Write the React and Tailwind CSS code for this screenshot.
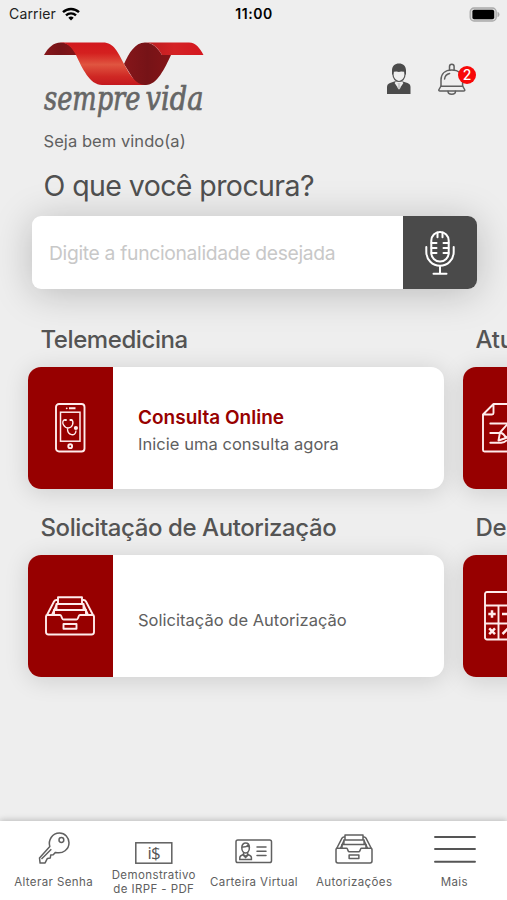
function WifiIcon() {
  return (
    <svg className="h-[14px] w-[18px]" viewBox="0 0 18 14" fill="none" stroke="#000" strokeWidth="2.4">
      <path d="M1 5.2a11.6 11.6 0 0 1 16 0" />
      <path d="M4 8.4a7.3 7.3 0 0 1 10 0" />
      <path d="M9 13.4 6.3 10.7a3.9 3.9 0 0 1 5.4 0Z" fill="#000" stroke="none" />
    </svg>
  );
}

function BatteryIcon() {
  return (
    <svg className="h-[15px] w-[32px]" viewBox="0 0 32 15">
      <rect x="1.200" y="1" width="26" height="13" rx="3.8" fill="#d8d8d8" stroke="#aaa" strokeWidth="1.3" />
      <rect x="3.400" y="2.800" width="21.800" height="9.400" rx="1.800" fill="#000" />
      <path d="M28.500 4.800 C31.200 6 31.200 9 28.500 10.200 Z" fill="#aaa" />
    </svg>
  );
}

function Logo() {
  return (
    <svg className="block h-[82px] w-[164px] overflow-visible" viewBox="0 0 164 82">
      <defs>
        <linearGradient id="band" x1="0" y1="0" x2="0" y2="1">
          <stop offset="0" stopColor="#d2181e" />
          <stop offset=".25" stopColor="#d4201f" />
          <stop offset=".52" stopColor="#e05540" />
          <stop offset=".8" stopColor="#cf2824" />
          <stop offset="1" stopColor="#c4181e" />
        </linearGradient>
        <linearGradient id="tail" x1="0" y1="0" x2="1" y2="0">
          <stop offset="0" stopColor="#b81c1e" />
          <stop offset=".5" stopColor="#d42225" />
          <stop offset="1" stopColor="#d4171f" />
        </linearGradient>
        <linearGradient id="fold" x1="0" y1="0" x2="1" y2="0">
          <stop offset="0" stopColor="#86161a" />
          <stop offset=".5" stopColor="#761317" />
          <stop offset="1" stopColor="#851417" />
        </linearGradient>
      </defs>
      <path d="M1 15C5 8 10 2.500 18 2.500c8 0 12 6 16 12.500Z" fill="url(#fold)" />
      <path d="M81 24C86 13 92 2.500 102 2.500c8 0 13 6 17 12.500h9C122 28 114 45 103 45H94Z" fill="url(#fold)" />
      <path d="M16 2.500h44c11 0 15 10 21 21.500 6 11 12 21 21 21H59C47 45 39 28 33 15 29 7 24 2.500 16 2.500Z" fill="url(#band)" />
      <path d="M102 2.500h44c7 0 11 6 14.500 12.500h-41.500C115 8 110 2.500 102 2.500Z" fill="url(#tail)" />
      <text x="1" y="70" fontFamily="'DejaVu Serif Condensed','DejaVu Serif',serif" fontStyle="italic" fontSize="33" fill="#666" stroke="#666" strokeWidth=".7" textLength="96.500" lengthAdjust="spacingAndGlyphs">sempre</text>
      <text x="102.500" y="70" fontFamily="'DejaVu Serif Condensed','DejaVu Serif',serif" fontStyle="italic" fontSize="33" fill="#666" stroke="#666" strokeWidth=".7" textLength="58" lengthAdjust="spacingAndGlyphs">vida</text>
    </svg>
  );
}

function UserIcon() {
  return (
    <svg className="h-[32px] w-[26px]" viewBox="0 0 26 32">
      <path d="M1 31v-7q0-3 3-4l5-1.800h7L21.500 20q3 1 3 4v7Z" fill="#4b4b4b" />
      <path d="M9.800 16.500h6.400v2.300l1.200 1.200L13 26.500 8.600 20l1.200-1.200Z" fill="#eee" />
      <path d="m11.500 20h3l-.5 2 .5 3-1.500 1.500L11.500 25l.5-3Z" fill="#ccc" />
      <path d="M7 7.500h12v4c0 4-3 7-6 7s-6-3-6-7Z" fill="#eee" stroke="#555" strokeWidth="1.200" />
      <path d="M6 11.500V7.500C6 3 9 .5 13 .5s7 2.500 7 7v4h-1L18.200 8.800q-4-.8-5.200.2-2-.9-5.200-.2L7 11.500Z" fill="#4b4b4b" />
    </svg>
  );
}

function BellIcon() {
  return (
    <svg className="h-[33px] w-[28px]" viewBox="0 0 28 33" fill="none" stroke="#5f5f5f" strokeWidth="1.500" strokeLinejoin="round" strokeLinecap="round">
      <path d="M11.500 7V3.500a2.300 2.300 0 0 1 4.600 0V7" />
      <path d="M3 23V17C3 11 7 7 13.800 7s10.800 4 10.800 10v6l2 3.500q.6 1.500-1 1.500H2q-1.600 0-1-1.500Z" />
      <path d="M2.800 23.300h22M10 28.200c0 4 7.500 4 7.500 0M6.600 16q.4-4.500 5-5.500" />
    </svg>
  );
}

function MicIcon() {
  return (
    <svg className="h-[46px] w-[30px]" viewBox="0 0 30 46" fill="none" stroke="#fff" strokeWidth="2" strokeLinecap="round">
      <rect x="6.300" y="2" width="17.400" height="29.500" rx="8.600" />
      <path d="M1.300 17v5a13.700 13.700 0 0 0 27.400 0v-5M15 36v7.500M8.500 43.800h13" />
      <path d="M12.500 2.500v4.700M17.500 2.500v4.700M6.500 13h5M6.500 18h5M6.500 23h5M23.500 13h-5M23.500 18h-5M23.500 23h-5" />
    </svg>
  );
}

function PhoneIcon() {
  return (
    <svg className="h-[50px] w-[31px]" viewBox="0 0 31 50" fill="none" stroke="#ffecec" strokeWidth="1.900">
      <rect x="1" y="1" width="28.500" height="47.500" rx="3" />
      <rect x="5.500" y="9.200" width="19.500" height="29" strokeWidth="1.500" />
      <path d="M14 5.300h6.500" strokeWidth="2" />
      <circle cx="11.700" cy="5.300" r=".9" fill="#ffecec" stroke="none" />
      <circle cx="15.200" cy="43.200" r="1.900" />
      <path d="M9.500 16.500c-4 3 0 8.500 3.700 8.500s6.500-5 3.500-8.500M12.500 25c-.5 8 8.500 9 8.500 2.500" strokeWidth="1.300" />
      <path d="M9.200 16.900h2.500M14.600 16.900H17" strokeWidth="2" />
      <circle cx="20.900" cy="25" r="2.100" fill="#ffecec" stroke="none" />
    </svg>
  );
}

function TrayIcon({ className, strokeWidth }) {
  return (
    <svg className={className} viewBox="0 0 50 40" fill="none" stroke="currentColor" strokeWidth={strokeWidth} strokeLinejoin="round">
      <path d="M1 20.500q0-1.500 1.500-1.500H15q.8 0 1.200 1l1 2.500q.4 1 1.500 1h12.600q1.100 0 1.500-1l1-2.500q.4-1 1.200-1h12.500q1.500 0 1.500 1.500V36q0 2.500-2.500 2.500h-43Q1 38.500 1 36Z" />
      <path d="M2 19 9 5.500q.8-1.500 2.500-1.500H13M48 19 41 5.500Q40.200 4 38.500 4H37M7 19l4.500-10M43 19 38.500 9" />
      <path d="M13 8V1.200h24V8M11.500 14V8h27v6M9 19v-5h32v5" />
      <rect x="18.500" y="28" width="13" height="4.800" />
    </svg>
  );
}

function DocumentIcon() {
  return (
    <svg className="h-[50px] w-[46px] shrink-0" viewBox="0 0 46 50" fill="none" stroke="#ffecec" strokeWidth="1.900" strokeLinejoin="round">
      <path d="M40 17V3q0-2-2-2H11.500L1 11.500V47q0 1.500 1.500 1.500H38q2 0 2-2V34M1 11.500h9q1.500 0 1.500-1.500V1" />
      <path d="M8.300 20.500H34M8.300 30h10M8.300 39.700h11q3 0 5-2" strokeLinecap="round" />
      <path d="m16.500 37.500 1.500-8L31 15l6 5.500L24 35Zm1.500-8q4 1 6 5.500" />
    </svg>
  );
}

function CalculatorIcon() {
  return (
    <svg className="h-[50px] w-[42px] shrink-0" viewBox="0 0 42 50" fill="none" stroke="#ffecec" strokeWidth="1.900">
      <rect x="1" y="1" width="40" height="47.500" rx="2" />
      <path d="M1 14.500h40M1 32.500h40M14.500 14.500v34M28 14.500v34" />
      <path d="M4.300 23h7.400M8 19.300v7.400M18 23h7M31 23h7M5.200 37.300l5.800 5.800M11 37.300l-5.800 5.800M18.500 43l6-6M31 40h7" strokeWidth="2.500" />
    </svg>
  );
}

function KeyIcon() {
  return (
    <svg className="h-[32px] w-[32px]" viewBox="0 0 32 32" fill="none" stroke="#606060" strokeWidth="1.500" strokeLinejoin="round">
      <path d="M11.800 14.500C10 8.500 14 1 21.500 1 27 1 31 5.500 31 10.800c0 6.500-6 11.500-13.500 9.600l-2.300 2.300-2.500.4-.4 2.900-2.900.4-2.300 4.500-5 .2-.6-5.100Z" />
      <circle cx="23.400" cy="8" r="2.400" />
      <path d="m3.500 27 9.800-9.800" />
    </svg>
  );
}

function MoneyIcon() {
  return (
    <svg className="h-[22px] w-[38px]" viewBox="0 0 38 22">
      <rect x=".8" y=".8" width="36" height="20.400" fill="none" stroke="#606060" strokeWidth="1.500" />
      <text x="12.500" y="16.500" fontFamily="Open Sans" fontSize="17" fill="#555" textLength="13.500">i$</text>
    </svg>
  );
}

function CardIcon() {
  return (
    <svg className="h-[25px] w-[38px]" viewBox="0 0 38 25" fill="none" stroke="#606060" strokeWidth="1.500">
      <rect x="1" y="1" width="35.500" height="22.500" rx="1.800" />
      <path d="M4.800 20.500v-2q0-1.800 3-2.800l2.800 2.800 2.800-2.800q3 1 3 2.800v2Z" />
      <path d="M8.600 13v2.700l2 1.800 2-1.800V13" />
      <path d="M6.800 8.500c0 3 1.500 5.500 3.800 5.500s3.800-2.500 3.800-5.500c0-6-7.600-6-7.600 0Zm0-.5h1.500q3.500 0 4.200-1.500Q12.800 8 14.400 8" />
      <path d="M22 8h9M22 12.300h9M22 16.600h9" strokeLinecap="round" />
    </svg>
  );
}

function MenuIcon() {
  return (
    <svg className="h-[30px] w-[43px]" viewBox="0 0 43 30" stroke="#555" strokeWidth="1.900" strokeLinecap="round">
      <path d="M2 3h40M2 15h40M2 27.700h40" />
    </svg>
  );
}

function ServiceCard({ heading, headingClass, icon, children }) {
  return (
    <section className="w-[416px] shrink-0">
      <h2 className={`h-[42px] whitespace-nowrap pl-[13px] text-[24px] font-medium leading-[30px] text-[#545454] ${headingClass}`}>{heading}</h2>
      <div className="flex h-[122px] overflow-hidden rounded-[13px] bg-white shadow-[0_3px_24px_rgba(0,0,0,0.14)]">
        <div className="flex w-[85.500px] shrink-0 items-center justify-center bg-[#970000] text-[#ffecec]">{icon}</div>
        <div className="flex flex-col justify-center whitespace-nowrap pl-[25px]">{children}</div>
      </div>
    </section>
  );
}

function NavItem({ icon, children, iconBox }) {
  return (
    <button className="flex w-[100.2px] shrink-0 flex-col items-center text-[11.5px] leading-[14px] tracking-[0.4px] text-[#606060]">
      <span className={iconBox}>{icon}</span>
      <span className="whitespace-nowrap">{children}</span>
    </button>
  );
}

export default function App() {
  return (
    <div className="flex h-[900px] w-[507px] flex-col overflow-hidden bg-[#eee] font-['Inter','Liberation_Sans',sans-serif]">
      <header className="grid h-[28px] shrink-0 grid-cols-[1fr_60px_1fr] items-center pl-[9px] pr-[6px] text-[14px] leading-[20px]">
        <div className="flex items-center gap-[6px] tracking-[0.15px] text-[#222]"><span>Carrier</span><WifiIcon /></div>
        <div className="pr-[2px] text-center font-semibold tracking-[0.5px] text-black">11:00</div>
        <div className="flex justify-end"><BatteryIcon /></div>
      </header>

      <div className="flex h-[96px] shrink-0 items-start justify-between pl-[43px] pr-[31px] pt-[12px]">
        <Logo />
        <div className="flex gap-[26px] pt-[23px]">
          <UserIcon />
          <div className="relative w-[38px]">
            <BellIcon />
            <span className="absolute left-[20px] top-[3px] flex h-[18px] w-[18px] items-center justify-center rounded-full bg-[#f80808] text-[14px] font-medium leading-none text-white">2</span>
          </div>
        </div>
      </div>

      <div className="h-[92px] shrink-0 pl-[43.5px] text-[#505050]">
        <p className="pt-[7px] text-[16.5px] leading-[20px] tracking-[0.06px] text-[#606060]">Seja bem vindo(a)</p>
        <h1 className="pt-[17px] text-[28.500px] font-normal leading-[36px] tracking-[-0.58px]">O que você procura?</h1>
      </div>

      <div className="ml-[31.500px] flex h-[73px] w-[445px] shrink-0 overflow-hidden rounded-[9px] bg-white shadow-[0_4px_38px_rgba(0,0,0,0.22)]">
        <input className="w-[371.500px] pl-[17.500px] pt-[2px] text-[19.300px] tracking-[-0.32px] outline-none placeholder:text-[#c8c8c8] placeholder:opacity-100" placeholder="Digite a funcionalidade desejada" />
        <button className="flex grow items-center justify-center bg-[#4a4a4a]"><MicIcon /></button>
      </div>

      <main className="flex grow flex-col gap-[24px] pl-[27.500px] pt-[36.400px]">
        <div className="flex gap-[19px]">
          <ServiceCard heading="Telemedicina" headingClass="tracking-[-0.42px]" icon={<PhoneIcon />}>
            <strong className="pt-[6px] text-[19px] font-semibold leading-[27px] text-[#970000]">Consulta Online</strong>
            <span className="text-[16.500px] leading-[27px] tracking-[0.04px] text-[#606060]">Inicie uma consulta agora</span>
          </ServiceCard>
          <ServiceCard heading="Atualização" headingClass="tracking-[-0.2px]" icon={<DocumentIcon />} />
        </div>
        <div className="flex gap-[19px]">
          <ServiceCard heading="Solicitação de Autorização" headingClass="tracking-[-0.42px]" icon={<TrayIcon className="h-[40px] w-[50px]" strokeWidth="1.900" />}>
            <span className="pt-[8px] text-[16.500px] leading-[24px] tracking-[0.02px] text-[#606060]">Solicitação de Autorização</span>
          </ServiceCard>
          <ServiceCard heading="Demonstrativo" headingClass="tracking-[-0.2px]" icon={<CalculatorIcon />} />
        </div>
      </main>

      <nav className="flex h-[79px] shrink-0 bg-white pl-[3.500px] shadow-[0_-1px_6px_rgba(0,0,0,0.22)]">
        <NavItem iconBox="flex h-[54px] items-start pt-[11px]" icon={<KeyIcon />}>Alterar Senha</NavItem>
        <NavItem iconBox="flex h-[47px] items-start pt-[21px]" icon={<MoneyIcon />}>Demonstrativo<br />de IRPF - PDF</NavItem>
        <NavItem iconBox="flex h-[54px] items-start pt-[18px]" icon={<CardIcon />}>Carteira Virtual</NavItem>
        <NavItem iconBox="flex h-[54px] items-start pt-[13px]" icon={<TrayIcon className="h-[30px] w-[38px]" strokeWidth="2" />}>Autorizações</NavItem>
        <NavItem iconBox="flex h-[54px] items-start pt-[13px]" icon={<MenuIcon />}>Mais</NavItem>
      </nav>
    </div>
  );
}
